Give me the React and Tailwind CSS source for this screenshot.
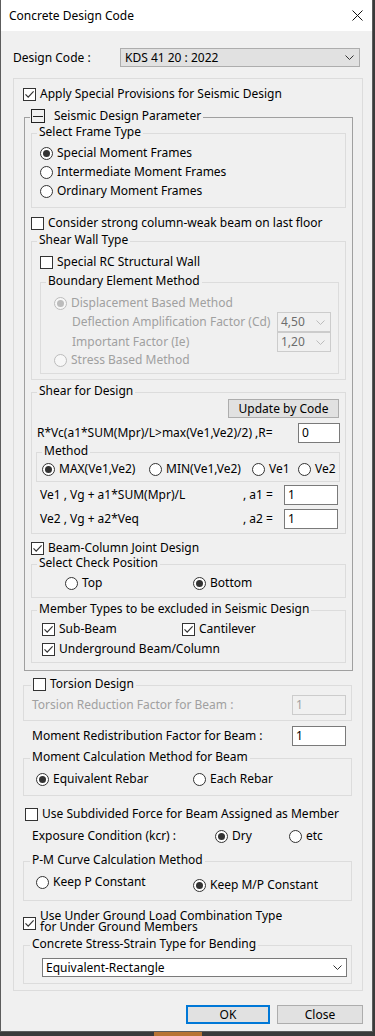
import React from "react";

const Check = ({ checked = false, disabled = false }) => (
  <span
    className={
      "flex h-[13px] w-[13px] shrink-0 items-center justify-center border " +
      (disabled ? "border-[#bcbcbc] bg-[#f0f0f0]" : "border-[#333333] bg-white")
    }
  >
    {checked ? (
      <svg width="11" height="11" viewBox="0 0 11 11" fill="none">
        <path d="M1.5 5.3 L4.2 8.1 L9.6 2.3" stroke="#333333" strokeWidth="1.2" />
      </svg>
    ) : null}
  </span>
);

const Radio = ({ checked = false, disabled = false }) => (
  <span
    className={
      "flex h-[13px] w-[13px] shrink-0 items-center justify-center rounded-full border " +
      (disabled ? "border-[#bcbcbc] bg-[#f7f7f7]" : "border-[#333333] bg-white")
    }
  >
    {checked ? (
      <span className={"h-[7px] w-[7px] rounded-full " + (disabled ? "bg-[#bcbcbc]" : "bg-[#333333]")} />
    ) : null}
  </span>
);

const Opt = ({ kind = "radio", checked = false, disabled = false, label, className = "" }) => (
  <div
    className={
      "flex h-[16px] shrink-0 items-center gap-[4px] whitespace-nowrap " +
      (disabled ? "text-[#a0a0a0] " : "") +
      className
    }
  >
    {kind === "radio" ? <Radio checked={checked} disabled={disabled} /> : <Check checked={checked} disabled={disabled} />}
    <span>{label}</span>
  </div>
);

const Group = ({ title, className = "", border = "border-[#dcdcdc]", titleClass = "left-[5px] px-[2px]", children }) => (
  <div className={"relative border " + border + " " + className}>
    {title ? (
      <div className={"absolute -top-[10px] flex h-[16px] items-center whitespace-nowrap bg-[#f0f0f0] leading-[16px] " + titleClass}>
        {title}
      </div>
    ) : null}
    {children}
  </div>
);

const Edit = ({ value, className = "", disabled = false }) => (
  <div
    className={
      "flex h-[20px] shrink-0 items-center border px-[3px] " +
      (disabled ? "border-[#cccccc] bg-[#f0f0f0] text-[#a0a0a0] " : "border-[#7a7a7a] bg-white ") +
      className
    }
  >
    {value}
  </div>
);

const Chevron = ({ color = "#333333" }) => (
  <svg width="9" height="5" viewBox="0 0 9 5" fill="none">
    <path d="M0.5 0.5 L4.5 4.5 L8.5 0.5" stroke={color} strokeWidth="1" />
  </svg>
);

const SmallCombo = ({ value }) => (
  <div className="mr-[7px] flex h-[20px] w-[54px] shrink-0 items-center justify-between border border-[#cccccc] bg-[#f0f0f0] pl-[3px] pr-[5px] text-[#6d6d6d]">
    <span>{value}</span>
    <Chevron color="#bcbcbc" />
  </div>
);

export default function App() {
  return (
    <div className="flex h-[1036px] w-[375px] flex-col bg-[#3a3a3a] font-['Noto_Sans','Noto_Sans_CJK_KR',sans-serif] text-[12px] leading-[16px] text-black">
      <div className="flex h-[1032px] w-[373px] flex-col border-x border-b border-[#5c5c5c] bg-[#f0f0f0]">
        {/* title bar */}
        <div className="flex h-[31px] shrink-0 items-center justify-between bg-white pl-[8px] pr-[9px]">
          <span className="text-[12px]">Concrete Design Code</span>
          <svg width="11" height="11" viewBox="0 0 11 11" fill="none">
            <path d="M0.5 0.5 L10.5 10.5 M10.5 0.5 L0.5 10.5" stroke="#111111" strokeWidth="1" />
          </svg>
        </div>

        {/* body */}
        <div className="flex flex-1 flex-col">
          <div className="mt-[17px] flex h-[19px] items-center pl-[12px]">
            <span className="w-[107px]">Design Code :</span>
            <div className="flex h-[19px] w-[240px] items-center justify-between border border-[#adadad] bg-[#e1e1e1] pl-[4px] pr-[5px]">
              <span>KDS 41 20 : 2022</span>
              <Chevron />
            </div>
          </div>

          {/* outer group */}
          <Group className="ml-[12px] mt-[11px] w-[350px] pb-[6px]" border="border-[#dcdcdc]">
            <Opt kind="check" checked label="Apply Special Provisions for Seismic Design" className="ml-[9px] mt-[7px]" />

            {/* Seismic Design Parameter */}
            <Group
              className="ml-[10px] mt-[15px] w-[329px] pb-[7px]"
              border="border-[#a0a0a0]"
              titleClass="left-[5px] pl-[1px] pr-[2px]"
              title={
                <>
                  <span className="relative flex h-[14px] w-[14px] items-center justify-center border border-[#222222] bg-[#f0f0f0]">
                    <span className="h-px w-[10px] bg-[#222222]" />
                  </span>
                  <span className="ml-[9px]">Seismic Design Parameter</span>
                </>
              }
            >
              <Group title="Select Frame Type" className="ml-[6px] mt-[15px] w-[315px] pb-[8px] pt-[11px]">
                <div className="flex flex-col gap-[3px] pl-[8px]">
                  <Opt checked label="Special Moment Frames" />
                  <Opt label="Intermediate Moment Frames" />
                  <Opt label="Ordinary Moment Frames" />
                </div>
              </Group>

              <Opt kind="check" label="Consider strong column-weak beam on last floor" className="ml-[6px] mt-[7px]" />

              <Group title="Shear Wall Type" className="ml-[6px] mt-[10px] w-[315px] pb-[5px] pt-[12px]">
                <Opt kind="check" label="Special RC Structural Wall" className="ml-[8px]" />
                <Group title="Boundary Element Method" className="ml-[8px] mt-[12px] w-[299px] pb-[5px] pt-[12px]">
                  <Opt checked disabled label="Displacement Based Method" className="ml-[13px]" />
                  <div className="mt-px flex h-[20px] items-center pl-[31px] text-[#a0a0a0]">
                    <span className="flex-1">Deflection Amplification Factor (Cd)</span>
                    <SmallCombo value="4,50" />
                  </div>
                  <div className="flex h-[20px] items-center pl-[31px] text-[#a0a0a0]">
                    <span className="flex-1">Important Factor (Ie)</span>
                    <SmallCombo value="1,20" />
                  </div>
                  <Opt disabled label="Stress Based Method" className="ml-[13px]" />
                </Group>
              </Group>

              <Group title="Shear for Design" className="ml-[6px] mt-[12px] w-[315px] pb-[4px] pt-[6px]">
                <div className="flex justify-end pr-[6px]">
                  <div className="flex h-[19px] w-[111px] items-center justify-center border border-[#adadad] bg-[#e1e1e1]">
                    Update by Code
                  </div>
                </div>
                <div className="mt-[5px] flex h-[20px] items-center pl-[5px] pr-[5px]">
                  <span className="flex-1 whitespace-nowrap">R*Vc(a1*SUM(Mpr)/L&gt;max(Ve1,Ve2)/2) ,R=</span>
                  <Edit value="0" className="w-[42px]" />
                </div>
                <Group title="Method" className="ml-[4px] mt-[9px] w-[304px] pb-[4px] pt-[8px]">
                  <div className="flex pl-[5px]">
                    <Opt checked label="MAX(Ve1,Ve2)" className="w-[107px]" />
                    <Opt label="MIN(Ve1,Ve2)" className="w-[103px] gap-[2px]" />
                    <Opt label="Ve1" className="w-[46px] gap-[2px]" />
                    <Opt label="Ve2" className="gap-[2px]" />
                  </div>
                </Group>
                <div className="mt-[3px] flex h-[20px] items-center pl-[8px] whitespace-nowrap">
                  <span className="w-[203px]">Ve1 , Vg + a1*SUM(Mpr)/L</span>
                  <span className="w-[41px]">, a1 =</span>
                  <Edit value="1" className="w-[54px]" />
                </div>
                <div className="mt-[4px] flex h-[20px] items-center pl-[8px] whitespace-nowrap">
                  <span className="w-[203px]">Ve2 , Vg + a2*Veq</span>
                  <span className="w-[41px]">, a2 =</span>
                  <Edit value="1" className="w-[54px]" />
                </div>
              </Group>

              <Opt kind="check" checked label="Beam-Column Joint Design" className="ml-[6px] mt-[6px]" />

              <Group title="Select Check Position" className="ml-[6px] mt-[8px] w-[315px] pb-[6px] pt-[10px]">
                <div className="flex pl-[33px]">
                  <Opt label="Top" className="w-[128px]" />
                  <Opt checked label="Bottom" />
                </div>
              </Group>

              <Group title="Member Types to be excluded in Seismic Design" className="ml-[6px] mt-[12px] w-[315px] pb-[5px] pt-[10px]">
                <div className="flex flex-col gap-[4px] pl-[10px]">
                  <div className="flex">
                    <Opt kind="check" checked label="Sub-Beam" className="w-[140px]" />
                    <Opt kind="check" checked label="Cantilever" />
                  </div>
                  <Opt kind="check" checked label="Underground Beam/Column" />
                </div>
              </Group>
            </Group>

            {/* lower section */}
            <div className="ml-[9px] flex w-[329px] flex-col">
              <Group
                className="mt-[14px] pb-[5px] pt-[9px]"
                titleClass="left-[7px] px-[2px]"
                title={<Opt kind="check" label="Torsion Design" />}
              >
                <div className="flex items-center pl-[8px] pr-[5px] text-[#a0a0a0]">
                  <span className="flex-1">Torsion Reduction Factor for Beam :</span>
                  <Edit disabled value="1" className="w-[54px]" />
                </div>
              </Group>

              <div className="mt-[5px] flex items-center pl-[9px] pr-[6px]">
                <span className="flex-1">Moment Redistribution Factor for Beam :</span>
                <Edit value="1" className="w-[54px]" />
              </div>

              <Group title="Moment Calculation Method for Beam" className="mt-[12px] pb-[8px] pt-[12px]" titleClass="left-[6px] px-[2px]">
                <div className="flex pl-[12px]">
                  <Opt checked label="Equivalent Rebar" className="w-[157px]" />
                  <Opt label="Each Rebar" />
                </div>
              </Group>

              <Opt kind="check" label="Use Subdivided Force for Beam Assigned as Member" className="ml-[2px] mt-[10px]" />

              <div className="mt-[6px] flex h-[16px] items-center pl-[9px]">
                <span className="w-[183px]">Exposure Condition (kcr) :</span>
                <Opt checked label="Dry" className="w-[74px]" />
                <Opt label="etc" />
              </div>

              <Group title="P-M Curve Calculation Method" className="mt-[17px] pb-[7px] pt-[12px]" titleClass="left-[6px] px-[2px]">
                <div className="flex items-start pl-[12px]">
                  <Opt label="Keep P Constant" className="w-[157px]" />
                  <Opt checked label="Keep M/P Constant" className="mt-[3px]" />
                </div>
              </Group>

              <div className="mt-[9px] flex items-start gap-[4px]">
                <span className="mt-[7px]">
                  <Check checked />
                </span>
                <span className="leading-[11px]">
                  Use Under Ground Load Combination Type
                  <br />
                  for Under Ground Members
                </span>
              </div>

              <Group title="Concrete Stress-Strain Type for Bending" className="mt-[13px] pb-[6px] pt-[12px]" titleClass="left-[6px] px-[2px]">
                <div className="ml-[18px] flex h-[19px] w-[305px] items-center justify-between border border-[#7a7a7a] bg-white pl-[3px] pr-[4px]">
                  <span>Equivalent-Rectangle</span>
                  <Chevron />
                </div>
              </Group>
            </div>
          </Group>

          {/* buttons */}
          <div className="mt-[14px] flex justify-end gap-[7px] pr-[9px]">
            <div className="flex h-[19px] w-[84px] items-center justify-center border-2 border-[#0078d7] bg-[#e1e1e1]">OK</div>
            <div className="flex h-[19px] w-[86px] items-center justify-center border border-[#adadad] bg-[#e1e1e1]">Close</div>
          </div>
        </div>
      </div>
      <div className="flex h-[4px]">
        <div className="w-[154px]" />
        <div className="w-[48px] bg-[#b87333]" />
      </div>
    </div>
  );
}
